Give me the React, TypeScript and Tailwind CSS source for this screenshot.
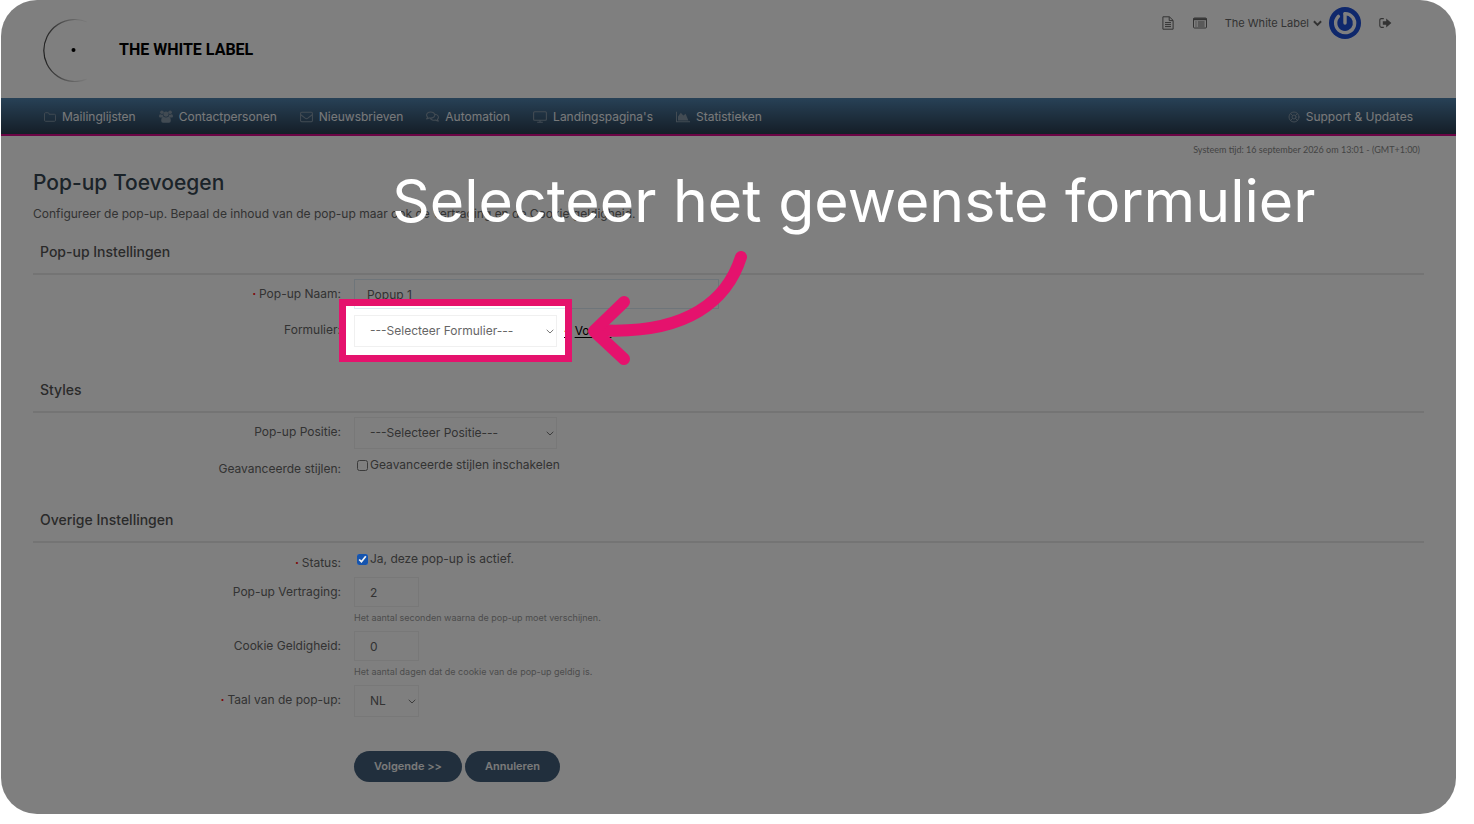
import React, { useState } from "react";
import { FaRegComments } from "react-icons/fa";
import { LifeBuoy } from "lucide-react";

const FolderIcon = () => (
    <svg viewBox="0 0 14 12" className="h-3 w-3" fill="none" stroke="currentColor" strokeWidth="1.1" strokeLinejoin="round">
        <path d="M.6 2.2Q.6 1 1.8 1H4.6Q5.8 1 5.8 2.2V2.8H12.2Q13.4 2.8 13.4 4V9.8Q13.4 11 12.2 11H1.8Q.6 11 .6 9.8Z" />
    </svg>
);

const UsersIcon = () => (
    <svg viewBox="0 0 14 13" className="h-[13px] w-[14px]" fill="currentColor">
        <circle cx="2.9" cy="2.2" r="1.8" />
        <circle cx="11.1" cy="2.2" r="1.8" />
        <circle cx="7" cy="4.1" r="2.6" />
        <path d="M0 6.2Q0 4.2 1.3 4.2 2.8 5 3.9 4.4 4 6 4.7 6.7 3.4 6.7 2.8 7.4H1.2Q0 7.4 0 6.2ZM14 6.2Q14 4.2 12.7 4.2 11.2 5 10.1 4.4 10 6 9.3 6.7 10.6 6.7 11.2 7.4H12.8Q14 7.4 14 6.2Z" />
        <path d="M4.6 6.8Q7 8.4 9.4 6.8 11.8 7 11.8 10.8 11.8 12.8 10 12.8H4Q2.2 12.8 2.2 10.8 2.2 7 4.6 6.8Z" />
    </svg>
);

const EnvelopeIcon = () => (
    <svg viewBox="0 0 14 12" className="h-3 w-[13px]" fill="none" stroke="currentColor" strokeWidth="1.1" strokeLinejoin="round">
        <rect x=".6" y="1" width="12.8" height="10" rx="1.2" />
        <path d="M.8 3.6 5.6 7.3Q7 8.3 8.4 7.3L13.2 3.6" />
    </svg>
);

const DesktopIcon = () => (
    <svg viewBox="0 0 14 12" className="h-3 w-[14px]" fill="none" stroke="currentColor" strokeWidth="1.1">
        <rect x=".6" y=".8" width="12.8" height="8.4" rx="1" />
        <path d="M7 9.2V11M4.2 11.2H9.8" />
    </svg>
);

const ChartIcon = () => (
    <svg viewBox="0 0 14 12" className="h-3 w-[14px]" fill="currentColor">
        <path d="M0 .8H1V10.2H14V11.2H0Z" />
        <path d="M2 9.4V5.6L4.8 1.8 7.4 4.4 9.6 2.8 12.4 9.4Z" />
    </svg>
);

const FileIcon = () => (
    <svg viewBox="0 0 12 14" className="h-[14px] w-3" fill="none" stroke="currentColor" strokeWidth="1" strokeLinejoin="round">
        <path d="M.9.8H7.4L11.1 4.4V13.2H.9Z" />
        <path d="M7.2.9V4.6H11M3 6.6H9M3 8.6H9M3 10.6H9" />
    </svg>
);

const ListIcon = () => (
    <svg viewBox="0 0 14 12" className="h-3 w-[14px]" fill="none" stroke="currentColor">
        <rect x=".5" y="1" width="13" height="10" rx="1" />
        <path d="M.5 2.2H13.5" strokeWidth="2" />
        <path d="M2.4 5H3.6M2.4 7H3.6M2.4 9H3.6M4.8 5H11.6M4.8 7H11.6M4.8 9H11.6" />
    </svg>
);

const SignOutIcon = () => (
    <svg viewBox="0 0 13 12" className="h-3 w-[13px]">
        <path d="M4.8 1.6H2.4Q.8 1.6 .8 3.2V8.8Q.8 10.4 2.4 10.4H4.8" fill="none" stroke="currentColor" strokeWidth="1.1" />
        <path d="M3.8 4.2H7.2V1.4L12.4 6 7.2 10.6V7.8H3.8Z" fill="currentColor" />
    </svg>
);

const PowerAvatar = () => (
    <svg viewBox="0 0 32 32" className="h-8 w-8">
        <circle cx="16" cy="16" r="16" fill="#1e50d8" />
        <path d="M16 6.6A9.5 9.5 0 1 1 9.4 9.4" fill="none" stroke="#fff" strokeWidth="3.4" strokeLinecap="round" />
        <path d="M16 6.8V16" fill="none" stroke="#fff" strokeWidth="3.4" strokeLinecap="round" />
    </svg>
);

const Chevron = ({ className }: { className: string }) => (
    <svg viewBox="0 0 8 5" className={className} fill="none" stroke="currentColor">
        <path d="M.7.8 4 4 7.3.8" />
    </svg>
);

const navItems = [
    { label: "Mailinglijsten", icon: <FolderIcon /> },
    { label: "Contactpersonen", icon: <UsersIcon /> },
    { label: "Nieuwsbrieven", icon: <EnvelopeIcon /> },
    { label: "Automation", icon: <FaRegComments className="h-[13px] w-[13px]" /> },
    { label: "Landingspagina's", icon: <DesktopIcon /> },
    { label: "Statistieken", icon: <ChartIcon /> },
];

const Section = ({ title, children }: { title: string; children: React.ReactNode }) => (
    <section className="mb-[33px]">
        <h2 className="border-b-2 border-[#e8e8e8] pb-[11px] pl-[7px] text-sm leading-5 font-medium text-[#555]">{title}</h2>
        <div className="flex flex-col gap-1.5 pt-1">{children}</div>
    </section>
);

interface RowProps {
    id: string;
    label: string;
    required?: boolean;
    check?: boolean;
    hint?: string;
    children: React.ReactNode;
}

const Row = ({ id, label, required, check, hint, children }: RowProps) => (
    <div className="flex items-start first:has-[[type=checkbox]]:mt-0.5">
        <label
            htmlFor={id}
            className={check ? "mt-1.5 mr-[13px] w-[308px] shrink-0 text-right leading-4" : "mr-[13px] w-[308px] shrink-0 text-right leading-[30px]"}
        >
            {required && <span className="font-bold text-[#ff1010]">· </span>}
            {label}:
        </label>
        <div>
            <div className="flex items-center">{children}</div>
            {hint && <p className="mt-1 text-[9px] leading-[14px] text-[#999]">{hint}</p>}
        </div>
    </div>
);

const Select = ({ id, option, small }: { id: string; option: string; small?: boolean }) => (
    <div className={small ? "relative w-[65px]" : "relative w-[203px]"}>
        <select id={id} className="block h-8 w-full appearance-none border border-[#f0f0f0] bg-white pl-[15px] text-[#666] outline-none">
            <option>{option}</option>
        </select>
        <Chevron className="pointer-events-none absolute top-3.5 right-[3px] h-[5px] w-2 text-[#777]" />
    </div>
);

// pink frame round the select, everything outside it is dimmed by the shadow
const Spotlight = () => (
    <div className="pointer-events-none absolute -inset-x-[15px] -top-4 -bottom-[15px] z-10 border-[7px] border-[#e5126d] shadow-[0_0_0_3000px_rgba(0,0,0,0.5)]">
        <svg viewBox="0 0 170 126" className="absolute top-[-60px] left-[236px] h-[126px] w-[170px]" fill="none" stroke="#e5126d" strokeWidth="12" strokeLinecap="round" strokeLinejoin="round">
            <path d="M159 11C146 52 108 90 14 84" />
            <path d="M42 56 12 85 42 113" />
        </svg>
    </div>
);

const App = () => {
    const [advanced, setAdvanced] = useState(false);
    const [active, setActive] = useState(true);

    return (
        <div className="bg-white pr-[18px] pb-2.5 pl-px font-['Inter',sans-serif] text-xs">
            <div className="relative overflow-hidden rounded-[36px] bg-white text-[#666]">
                <header className="flex h-[98px] items-start justify-between pr-16 pl-10">
                    <a href="#" className="flex items-center pt-[18px] text-black">
                        <svg viewBox="0 0 64 64" className="h-16 w-16" fill="none">
                            <defs>
                                <linearGradient id="ring" x1="0" x2="48" y1="0" y2="0" gradientUnits="userSpaceOnUse">
                                    <stop offset="0" stopColor="#333" />
                                    <stop offset="0.5" stopColor="#333" stopOpacity="0.4" />
                                    <stop offset="1" stopColor="#333" stopOpacity="0" />
                                </linearGradient>
                            </defs>
                            <path d="M46 4A31 31 0 1 0 46 61" stroke="url(#ring)" strokeWidth="1.2" />
                            <circle cx="32.5" cy="32" r="2" fill="#000" />
                        </svg>
                        <span className="ml-3.5 font-['Roboto',sans-serif] text-base font-bold">THE WHITE LABEL</span>
                    </a>
                    <div className="flex items-center pt-[7px]">
                        <a href="#" aria-label="Documenten"><FileIcon /></a>
                        <a href="#" aria-label="Overzicht" className="ml-[19px]"><ListIcon /></a>
                        <button className="ml-[18px] flex items-center gap-1 text-[11px] text-[#666]">
                            The White Label
                            <svg viewBox="0 0 10 7" className="h-[7px] w-[9px]" fill="none" stroke="currentColor" strokeWidth="2.2">
                                <path d="M1 1 5 5 9 1" />
                            </svg>
                        </button>
                        <div className="mr-[18px] ml-[7px]"><PowerAvatar /></div>
                        <a href="#" aria-label="Uitloggen"><SignOutIcon /></a>
                    </div>
                </header>

                <nav className="flex h-[38px] items-center justify-between border-b-2 border-[#d6088a] bg-linear-to-b from-[#5083ae] to-[#2a3d50] px-[43px] pt-px text-[#f0f2f4]">
                    <div className="flex gap-[23px]">
                        {navItems.map((item) => (
                            <a key={item.label} href="#" className="flex items-center gap-1.5">
                                <span className="text-[#8496a6]">{item.icon}</span>
                                {item.label}
                            </a>
                        ))}
                    </div>
                    <a href="#" className="flex items-center gap-1.5">
                        <LifeBuoy className="h-3 w-3 text-[#8496a6]" />
                        Support &amp; Updates
                    </a>
                </nav>

                <main className="px-8 pb-8">
                    <p className="pr-1 text-right font-['Lato',sans-serif] text-[9px] leading-7 text-[#888]">
                        Systeem tijd: 16 september 2026 om 13:01 - (GMT+1:00)
                    </p>
                    <h1 className="mt-[5px] text-[21px] leading-7 font-medium text-[#364652]">Pop-up Toevoegen</h1>
                    <p className="mt-[7px] mb-[18px] leading-5">
                        Configureer de pop-up. Bepaal de inhoud van de pop-up maar ook de vertraging en de Cookie geldigheid.
                    </p>

                    <form onSubmit={(e) => e.preventDefault()}>
                        <Section title="Pop-up Instellingen">
                            <Row id="naam" label="Pop-up Naam" required>
                                <input id="naam" type="text" defaultValue="Popup 1" className="h-[30px] w-[365px] border border-[#dcebf5] px-3 outline-none" />
                            </Row>
                            <Row id="formulier" label="Formulier">
                                <div className="relative">
                                    <Select id="formulier" option="---Selecteer Formulier---" />
                                    <Spotlight />
                                </div>
                                <a href="#" className="ml-[7px] text-black underline underline-offset-2">
                                    <span className="mr-1.5">‹</span>Vorige
                                </a>
                            </Row>
                        </Section>

                        <Section title="Styles">
                            <Row id="positie" label="Pop-up Positie">
                                <Select id="positie" option="---Selecteer Positie---" />
                            </Row>
                            <Row id="stijlen" label="Geavanceerde stijlen" check>
                                <input id="stijlen" type="checkbox" checked={advanced} onChange={(e) => setAdvanced(e.target.checked)} className="ml-[3px] h-[11px] w-[11px]" />
                                <span className="ml-0.5 leading-5">Geavanceerde stijlen inschakelen</span>
                            </Row>
                        </Section>

                        <Section title="Overige Instellingen">
                            <Row id="status" label="Status" required check>
                                <input id="status" type="checkbox" checked={active} onChange={(e) => setActive(e.target.checked)} className="relative z-20 ml-[3px] h-[11px] w-[11px] accent-[#0a50b4] opacity-90" />
                                <span className="ml-0.5 leading-5">Ja, deze pop-up is actief.</span>
                            </Row>
                            <Row id="vertraging" label="Pop-up Vertraging" hint="Het aantal seconden waarna de pop-up moet verschijnen.">
                                <input id="vertraging" type="text" defaultValue="2" className="h-[30px] w-[65px] border border-[#f0f0f0] px-[15px] outline-none" />
                            </Row>
                            <Row id="cookie" label="Cookie Geldigheid" hint="Het aantal dagen dat de cookie van de pop-up geldig is.">
                                <input id="cookie" type="text" defaultValue="0" className="h-[30px] w-[65px] border border-[#f0f0f0] px-[15px] outline-none" />
                            </Row>
                            <Row id="taal" label="Taal van de pop-up" required>
                                <Select id="taal" option="NL" small />
                            </Row>
                        </Section>

                        <div className="flex gap-[3px] pt-px pl-[321px] text-[11px] font-semibold text-[#f4f4f4]">
                            <button type="submit" className="h-[31px] rounded-full bg-[#425e7a] px-5">Volgende &gt;&gt;</button>
                            <button type="button" className="h-[31px] rounded-full bg-[#425e7a] px-5">Annuleren</button>
                        </div>
                    </form>
                </main>

                <p className="pointer-events-none absolute top-[171px] left-[391px] z-20 text-[59px] leading-[60px] whitespace-nowrap text-white">
                    Selecteer het gewenste formulier
                </p>
            </div>
        </div>
    );
};

export default App;
